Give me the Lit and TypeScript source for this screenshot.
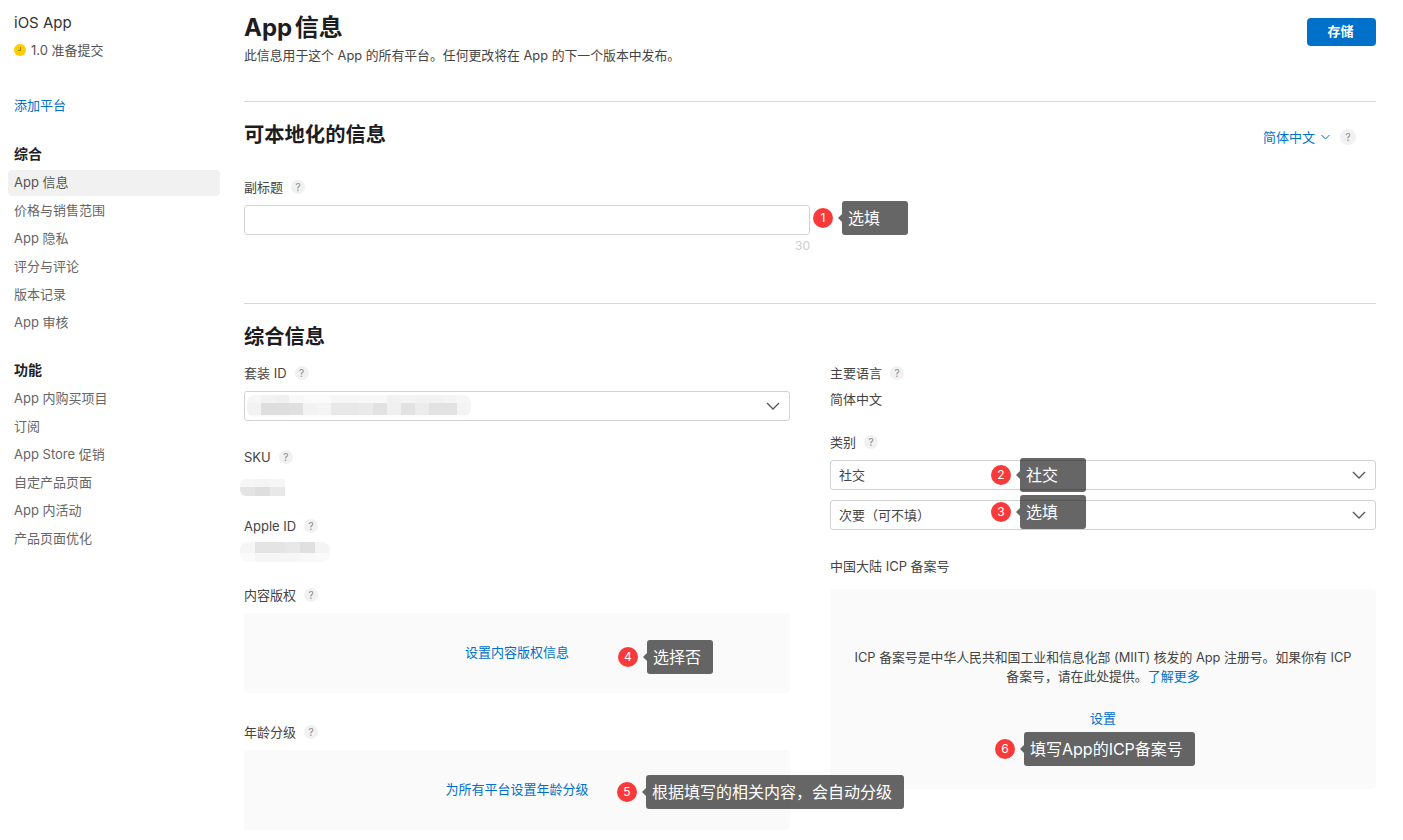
import { LitElement, html, css } from "lit";
import { customElement, property } from "lit/decorators.js";

const FONT = css`"Inter", "Noto Sans CJK SC", sans-serif`;

const overview = ["App 信息", "价格与销售范围", "App 隐私", "评分与评论", "版本记录", "App 审核"];
const features = ["App 内购买项目", "订阅", "App Store 促销", "自定产品页面", "App 内活动", "产品页面优化"];

const notes = [
    { n: 1, text: "选填", x: 813, y: 201 },
    { n: 2, text: "社交", x: 991, y: 458 },
    { n: 3, text: "选填", x: 991, y: 495 },
    { n: 4, text: "选择否", x: 618, y: 640 },
    { n: 5, text: "根据填写的相关内容，会自动分级", x: 617, y: 775 },
    { n: 6, text: "填写App的ICP备案号", x: 995, y: 732 },
];

// shades of the mosaic that hides the ids in the screenshot, each row with its height
const bundleBlur = [
    { h: 8, shades: [246, 242, 240, 248, 250, 250, 246, 246, 248, 248, 242, 244, 242, 242, 244, 246] },
    { h: 12, shades: [242, 222, 222, 224, 242, 244, 232, 232, 234, 226, 240, 226, 236, 226, 226, 244] },
    { h: 2, shades: [250, 250, 250, 252, 252, 252, 252, 252, 252, 252, 252, 252, 252, 252, 252, 252] },
];
const skuBlur = [
    { h: 8, shades: [246, 244, 246] },
    { h: 9, shades: [228, 222, 232] },
];
const appleBlur = [
    { h: 11, shades: [246, 228, 228, 232, 224, 244] },
    { h: 9, shades: [250, 246, 246, 246, 248, 250] },
];

const chevron = html`<svg width="14" height="8" viewBox="0 0 14 8" fill="none" stroke="#555" stroke-width="1.3"><path d="M1 1l6 6 6-6"/></svg>`;

@customElement("help-dot")
export class HelpDot extends LitElement {
    static styles = css`
        :host {
            display: inline-flex;
            align-items: center;
            justify-content: center;
            width: 14px;
            height: 14px;
            border-radius: 50%;
            background: #f1f1f1;
            color: #8a8a8a;
            font-family: ${FONT};
            font-size: 10px;
            line-height: 14px;
            flex: none;
        }
    `;

    protected render() {
        return html`?`;
    }
}

@customElement("note-tip")
export class NoteTip extends LitElement {
    static styles = css`
        :host {
            position: absolute;
            display: flex;
            align-items: center;
            font-family: ${FONT};
        }

        .num {
            width: 20px;
            height: 20px;
            border-radius: 50%;
            background: #f93a3a;
            color: #fff;
            font-size: 12px;
            line-height: 20px;
            text-align: center;
            flex: none;
        }

        .arrow {
            width: 0;
            height: 0;
            margin-left: 5px;
            border-style: solid;
            border-width: 4px 4px 4px 0;
            border-color: transparent rgba(0, 0, 0, 0.6) transparent transparent;
            flex: none;
        }

        .box {
            height: 34px;
            padding: 0 12px 0 6px;
            border-radius: 3px;
            background: rgba(0, 0, 0, 0.6);
            color: #fff;
            font-size: 16px;
            line-height: 34px;
            white-space: nowrap;
        }

        .short {
            width: 60px;
            padding-right: 0;
        }
    `;

    @property({ type: Number }) n = 1;
    @property() text = "";

    protected render() {
        return html`
            <span class="num">${this.n}</span>
            <span class="arrow"></span>
            <span class="box ${this.text.length <= 3 ? "short" : ""}">${this.text}</span>
        `;
    }
}

@customElement("app-root")
export class AppRoot extends LitElement {
    static styles = css`
        :host {
            display: block;
            position: relative;
            width: 1403px;
            height: 840px;
            overflow: hidden;
            background: #fff;
            color: #333;
            font-family: ${FONT};
            font-size: 13px;
            line-height: 18px;
        }

        .page {
            display: flex;
        }

        /* sidebar */
        aside {
            width: 220px;
            margin-right: 24px;
            padding-top: 13px;
            flex: none;
            box-sizing: border-box;
        }

        .app-name {
            padding-left: 14px;
            font-size: 15px;
            line-height: 20px;
            color: #333;
        }

        .status {
            display: flex;
            align-items: center;
            gap: 5px;
            margin-top: 8px;
            padding-left: 14px;
            color: #555;
        }

        .add {
            display: block;
            margin-top: 37px;
            padding-left: 14px;
        }

        a {
            color: #0070c9;
            text-decoration: none;
        }

        .group-title {
            padding-left: 14px;
            font-size: 14px;
            font-weight: 700;
            color: #222;
        }

        .first {
            margin-top: 31px;
        }

        .second {
            margin-top: 25px;
        }

        .nav {
            display: flex;
            flex-direction: column;
            gap: 2px;
            margin: 7px 0 0 8px;
        }

        .nav div {
            height: 26px;
            padding-left: 6px;
            border-radius: 4px;
            line-height: 24px;
            color: #666;
        }

        .nav .active {
            background: #f1f1f1;
            color: #555;
        }

        /* main column */
        main {
            width: 1132px;
            padding-top: 12px;
            flex: none;
        }

        .head {
            display: flex;
            justify-content: space-between;
            align-items: flex-start;
            margin-bottom: 36px;
        }

        h1 {
            margin: 0;
            font-size: 24px;
            line-height: 32px;
            font-weight: 700;
            word-spacing: -3px;
            color: #1d1d1f;
        }

        .lead {
            margin-top: 3px;
            font-size: 12.85px;
            color: #444;
        }

        button {
            width: 69px;
            height: 28px;
            margin-top: 6px;
            padding: 0 2px 3px 0;
            border: 0;
            border-radius: 4px;
            background: #0070c9;
            color: #fff;
            font-family: inherit;
            font-size: 13px;
            font-weight: 700;
        }

        hr {
            height: 1px;
            margin: 0;
            border: 0;
            background: #d6d6d6;
        }

        h2 {
            margin: 19px 0 -1px;
            font-size: 20.3px;
            line-height: 28px;
            font-weight: 700;
            color: #1d1d1f;
        }

        .section-head {
            display: flex;
            justify-content: space-between;
        }

        .lang {
            display: flex;
            align-items: center;
            gap: 6px;
            margin: 26px 20px 0 0;
            height: 18px;
            color: #0070c9;
        }

        .lang help-dot {
            margin-left: 4px;
            width: 16px;
            height: 16px;
        }

        .label {
            display: flex;
            align-items: center;
            gap: 8px;
            height: 18px;
            color: #444;
        }

        .subtitle {
            width: 566px;
            margin-top: 30px;
        }

        input,
        .select {
            display: flex;
            align-items: center;
            justify-content: space-between;
            width: 100%;
            height: 30px;
            margin: 9px 0 0;
            padding: 0 9px 0 8px;
            border: 1px solid #d2d2d2;
            border-radius: 3px;
            box-sizing: border-box;
            background: #fff;
            color: #444;
        }

        .count {
            margin-top: 2px;
            text-align: right;
            font-size: 12px;
            color: #ccc;
        }

        .rule-2 {
            margin-top: 48px;
        }

        .cols {
            display: grid;
            grid-template-columns: 546px 546px;
            column-gap: 40px;
            margin-top: 14px;
        }

        .col {
            display: flex;
            flex-direction: column;
        }

        .after-select {
            margin-top: 27px;
        }

        .apple-label {
            margin-top: 21px;
        }

        .copyright-label {
            margin-top: 24px;
        }

        .age-label {
            margin-top: 30px;
        }

        .blur {
            display: flex;
            flex-direction: column;
            width: fit-content;
            overflow: hidden;
            border-radius: 8px;
        }

        .blur-row {
            display: flex;
        }

        .blur-row i {
            display: block;
            width: 14px;
        }

        .sku-blur {
            margin: 13px 0 0 -4px;
            border-radius: 6px 0 0 6px;
        }

        .apple-blur {
            margin: 7px 0 0 -4px;
        }

        .sku-blur i,
        .apple-blur i {
            width: 15px;
        }

        .bundle-blur {
            margin-left: -6px;
        }

        .panel {
            display: flex;
            align-items: center;
            justify-content: center;
            height: 80px;
            margin-top: 9px;
            padding-bottom: 2px;
            box-sizing: border-box;
            border-radius: 4px;
            background: #fafafa;
        }

        .primary-value {
            margin-top: 8px;
            color: #444;
        }

        .category-label {
            margin-top: 25px;
        }

        .second-select {
            margin-top: 10px;
        }

        .icp-label {
            margin-top: 27px;
        }

        .icp {
            display: flex;
            flex-direction: column;
            align-items: center;
            justify-content: center;
            gap: 23px;
            height: 200px;
            margin-top: 14px;
            padding: 0 20px 2px;
            box-sizing: border-box;
            border-radius: 4px;
            background: #fafafa;
            text-align: center;
            font-size: 12.85px;
            color: #444;
        }

        .icp a {
            font-size: 13px;
        }
    `;

    private renderBlur(rows: { h: number; shades: number[] }[], cls: string) {
        return html`
            <div class="blur ${cls}">
                ${rows.map(
                    (row) => html`
                        <div class="blur-row">
                            ${row.shades.map(
                                (v) => html`<i style="height: ${row.h}px; background: rgb(${v},${v},${v})"></i>`
                            )}
                        </div>
                    `
                )}
            </div>
        `;
    }

    private renderLabel(text: string, cls = "") {
        return html`<div class="label ${cls}"><span>${text}</span><help-dot></help-dot></div>`;
    }

    protected render() {
        return html`
            <div class="page">
                <aside>
                    <div class="app-name">iOS App</div>
                    <div class="status">
                        <svg width="12" height="12" viewBox="0 0 12 12">
                            <circle cx="6" cy="6" r="6" fill="#fc0"></circle>
                            <path d="M6.5 3v3.5H4" fill="none" stroke="#8a6d00" stroke-width="0.8"></path>
                        </svg>
                        <span>1.0 准备提交</span>
                    </div>
                    <a class="add" href="#">添加平台</a>
                    <div class="group-title first">综合</div>
                    <div class="nav">
                        ${overview.map((item, i) => html`<div class=${i === 0 ? "active" : ""}>${item}</div>`)}
                    </div>
                    <div class="group-title second">功能</div>
                    <div class="nav">${features.map((item) => html`<div>${item}</div>`)}</div>
                </aside>

                <main>
                    <div class="head">
                        <div>
                            <h1>App 信息</h1>
                            <div class="lead">此信息用于这个 App 的所有平台。任何更改将在 App 的下一个版本中发布。</div>
                        </div>
                        <button>存储</button>
                    </div>
                    <hr />

                    <div class="section-head">
                        <h2>可本地化的信息</h2>
                        <div class="lang">
                            <span>简体中文</span>
                            <svg width="9" height="6" viewBox="0 0 9 6" fill="none" stroke="#0070c9" stroke-width="1"><path d="M.5 1l4 4 4-4"/></svg>
                            <help-dot></help-dot>
                        </div>
                    </div>
                    <div class="subtitle">
                        ${this.renderLabel("副标题")}
                        <input type="text" />
                        <div class="count">30</div>
                    </div>
                    <hr class="rule-2" />

                    <h2>综合信息</h2>
                    <div class="cols">
                        <div class="col">
                            ${this.renderLabel("套装 ID")}
                            <div class="select">${this.renderBlur(bundleBlur, "bundle-blur")}${chevron}</div>
                            ${this.renderLabel("SKU", "after-select")}
                            ${this.renderBlur(skuBlur, "sku-blur")}
                            ${this.renderLabel("Apple ID", "apple-label")}
                            ${this.renderBlur(appleBlur, "apple-blur")}
                            ${this.renderLabel("内容版权", "copyright-label")}
                            <div class="panel"><a href="#">设置内容版权信息</a></div>
                            ${this.renderLabel("年龄分级", "age-label")}
                            <div class="panel"><a href="#">为所有平台设置年龄分级</a></div>
                        </div>
                        <div class="col">
                            ${this.renderLabel("主要语言")}
                            <div class="primary-value">简体中文</div>
                            ${this.renderLabel("类别", "category-label")}
                            <div class="select"><span>社交</span>${chevron}</div>
                            <div class="select second-select"><span>次要（可不填）</span>${chevron}</div>
                            <div class="label icp-label">中国大陆 ICP 备案号</div>
                            <div class="icp">
                                <div>ICP 备案号是中华人民共和国工业和信息化部 (MIIT) 核发的 App 注册号。如果你有 ICP 备案号，请在此处提供。<a href="#">了解更多</a></div>
                                <a href="#">设置</a>
                            </div>
                        </div>
                    </div>
                </main>
            </div>

            ${notes.map(
                (note) => html`<note-tip .n=${note.n} .text=${note.text} style="left: ${note.x}px; top: ${note.y}px"></note-tip>`
            )}
        `;
    }
}

declare global {
    interface HTMLElementTagNameMap {
        "app-root": AppRoot;
        "help-dot": HelpDot;
        "note-tip": NoteTip;
    }
}
